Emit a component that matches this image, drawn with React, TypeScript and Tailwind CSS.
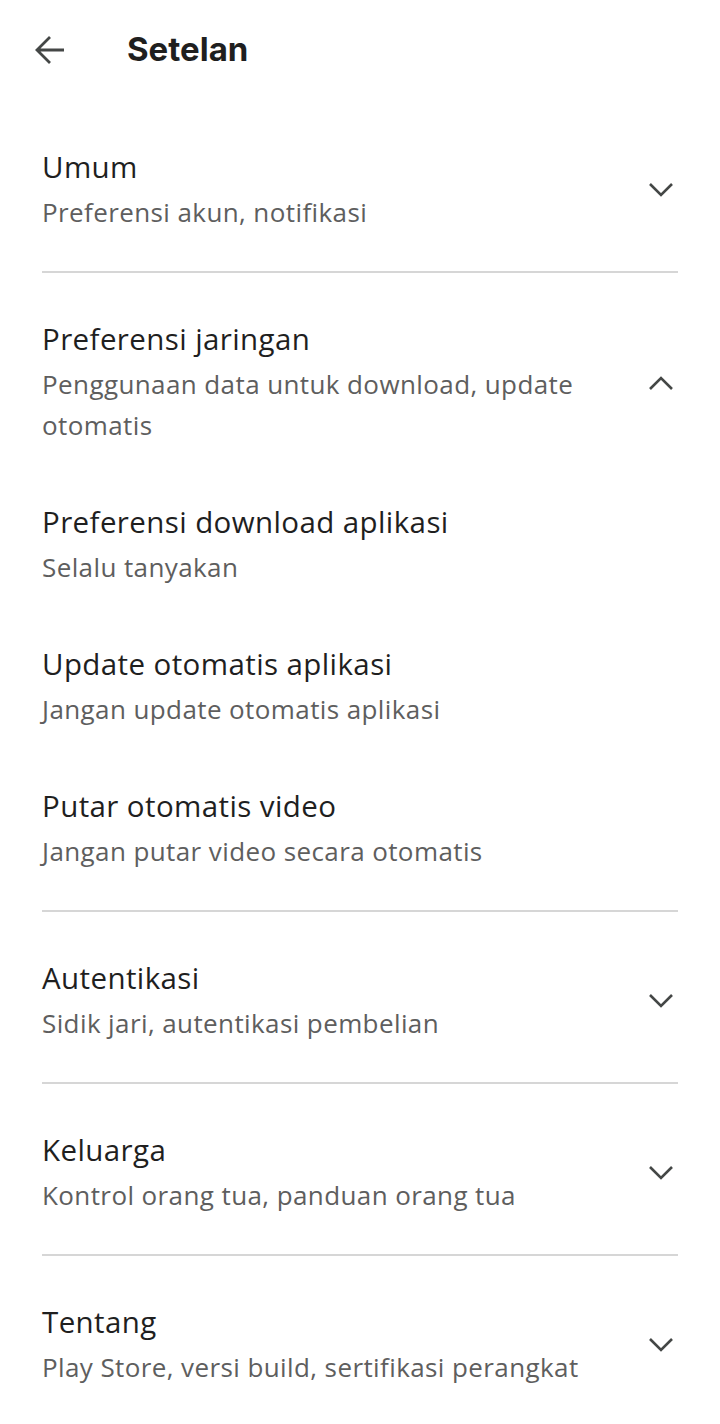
import React from "react";

type Row = { title: string; subtitle: string };

type Section = {
  header: Row;
  open?: boolean;
  items?: Row[];
};

const sections: Section[] = [
  { header: { title: "Umum", subtitle: "Preferensi akun, notifikasi" } },
  {
    header: {
      title: "Preferensi jaringan",
      subtitle: "Penggunaan data untuk download, update otomatis",
    },
    open: true,
    items: [
      { title: "Preferensi download aplikasi", subtitle: "Selalu tanyakan" },
      { title: "Update otomatis aplikasi", subtitle: "Jangan update otomatis aplikasi" },
      { title: "Putar otomatis video", subtitle: "Jangan putar video secara otomatis" },
    ],
  },
  { header: { title: "Autentikasi", subtitle: "Sidik jari, autentikasi pembelian" } },
  { header: { title: "Keluarga", subtitle: "Kontrol orang tua, panduan orang tua" } },
  { header: { title: "Tentang", subtitle: "Play Store, versi build, sertifikasi perangkat" } },
];

const Chevron = ({ up }: { up?: boolean }) => (
  <svg width="26" height="16" viewBox="0 0 26 16" className="shrink-0">
    <polyline
      points={up ? "2,14 13,3 24,14" : "2,2 13,13 24,2"}
      fill="none"
      stroke="#444746"
      strokeWidth="2.6"
    />
  </svg>
);

const Texts = ({ row }: { row: Row }) => (
  <div className="flex min-w-0 flex-1 flex-col gap-[5px]">
    <div className="text-[29.5px] leading-[40px] tracking-[0.4px] text-[#1f1f1f]">{row.title}</div>
    <div className="max-w-[560px] text-[26px] leading-[41px] tracking-[0.4px] text-[#5e5e5e]">
      {row.subtitle}
    </div>
  </div>
);

const App: React.FC = () => {
  return (
    <div
      className="min-h-[1424px] w-[720px] bg-white"
      style={{ fontFamily: "'Open Sans', Roboto, sans-serif" }}
    >
      <header className="flex h-[100px] items-center">
        <div className="flex w-[127px] items-center pl-[34px]">
          <svg width="32" height="32" viewBox="0 0 32 32">
            <path
              d="M30 16H4M16 3L3 16l13 13"
              fill="none"
              stroke="#444746"
              strokeWidth="2.8"
            />
          </svg>
        </div>
        <h1
          className="text-[33px] font-bold text-[#1f1f1f]"
          style={{ fontFamily: "Inter, 'Open Sans', sans-serif" }}
        >
          Setelan
        </h1>
      </header>

      <main className="px-[42px]">
        {sections.map((s, i) => (
          <div key={s.header.title} className={i > 0 ? "border-t-2 border-[#d6d6d6]" : ""}>
            <div className={`flex items-center ${i === 0 ? "pt-[47px]" : "pt-[46px]"} ${s.open ? "" : "pb-[38px]"}`}>
              <Texts row={s.header} />
              <div className="flex w-[40px] justify-end pr-[4px]">
                <Chevron up={s.open} />
              </div>
            </div>
            {s.open && (
              <div className="flex flex-col gap-[56px] pb-[38px] pt-[56px]">
                {s.items?.map((it) => (
                  <Texts key={it.title} row={it} />
                ))}
              </div>
            )}
          </div>
        ))}
      </main>
    </div>
  );
};

export default App;
